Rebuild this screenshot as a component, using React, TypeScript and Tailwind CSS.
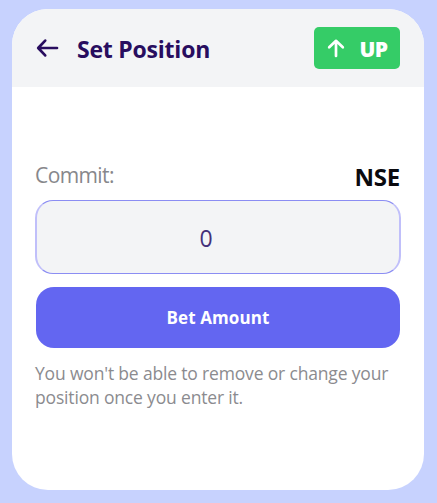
import { useState } from "react";

const ArrowLeft = () => (
  <svg width="24" height="20" viewBox="0 0 24 20" fill="none" stroke="currentColor" strokeWidth="2.7" strokeLinecap="round" strokeLinejoin="round">
    <path d="M21 10H2.8M9.2 2.6L2.2 10l7 7.4" />
  </svg>
);

const ArrowUp = () => (
  <svg width="18" height="20" viewBox="0 0 18 20" fill="none" stroke="currentColor" strokeWidth="2.7" strokeLinecap="round" strokeLinejoin="round">
    <path d="M9 18V3M2.2 9.2L9 2.8l6.8 6.4" />
  </svg>
);

const App: React.FC = () => {
  const [amount, setAmount] = useState("0");

  return (
    <div className="h-[503px] w-[437px] bg-[#c7d2fe] pt-[9px] pl-3 font-['Open_Sans','Noto_Sans',sans-serif]">
      <div className="h-[481px] w-[412px] overflow-hidden rounded-[36px] bg-white">
        <header className="flex h-[78px] items-center justify-between bg-[#f3f4f6] pr-6 pl-6">
          <div className="flex items-center text-[#280d5f]">
            <button aria-label="Back">
              <ArrowLeft />
            </button>
            <h1 className="ml-[17px] pt-[3px] text-[23px] font-bold tracking-[-0.22px] whitespace-nowrap">Set Position</h1>
          </div>
          <div className="flex h-[42px] w-[86px] items-center justify-center gap-[14px] rounded-[5px] bg-[#35cc67] pl-px text-white">
            <ArrowUp />
            <span className="pt-[3px] text-[21px] font-extrabold tracking-[-0.5px]">UP</span>
          </div>
        </header>

        <main className="px-[23px] pt-[73px]">
          <div className="flex h-10 justify-between pr-px">
            <span className="text-[21px] leading-[30px] tracking-[-0.6px] text-[#87878b]">Commit:</span>
            <span className="text-2xl leading-[34px] font-bold tracking-[-0.2px] text-[#0a0a0f]">NSE</span>
          </div>
          <input
            className="block h-[74px] w-full rounded-[18px] border-x-2 border-y border-x-[#c0bffa] border-y-[#8b8df3] bg-[#f3f4f6] pt-0.5 pr-6 text-center text-[23px] text-[#44307a] outline-none"
            value={amount}
            onChange={(e) => setAmount(e.target.value)}
          />
          <div className="px-px">
            <button className="mt-[13px] h-[61px] w-full rounded-[18px] bg-[#6366f1] text-[17px] font-bold tracking-[0.1px] text-white">
              Bet Amount
            </button>
            <p className="-ml-px mt-[13px] text-[17.5px] leading-6 tracking-[-0.17px] text-[#8b8b8f]">
              <span className="block whitespace-nowrap">You won't be able to remove or change your</span>
              <span className="block whitespace-nowrap">position once you enter it.</span>
            </p>
          </div>
        </main>
      </div>
    </div>
  );
};

export default App;
